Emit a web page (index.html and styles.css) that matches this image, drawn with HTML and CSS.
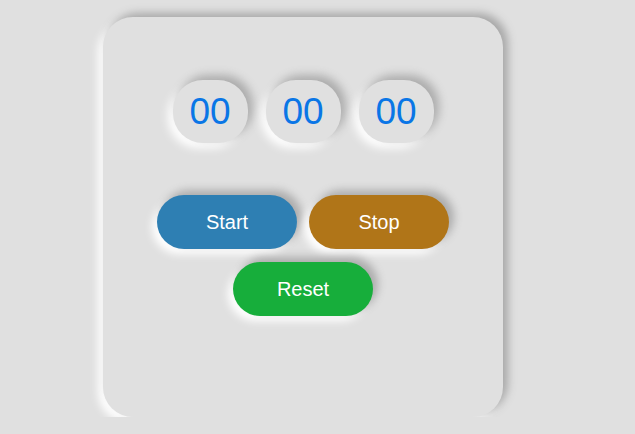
FILE: index.html
```html
<!DOCTYPE html>
<html>
<head>
<meta charset="utf-8">
<link rel="stylesheet" href="styles.css">
</head>
<body>
<div class="card">
  <div class="time">
    <div class="unit">00</div>
    <div class="unit">00</div>
    <div class="unit">00</div>
  </div>
  <div class="controls">
    <button class="btn start">Start</button>
    <button class="btn stop">Stop</button>
    <button class="btn reset">Reset</button>
  </div>
</div>
</body>
</html>
```
FILE: styles.css
```css
html, body {
  margin: 0;
  padding: 0;
  background: #e0e0e0;
  font-family: "Liberation Sans", Arial, sans-serif;
}
body {
  padding: 17px 0 0 103px;
}
.card {
  width: 400px;
  height: 400px;
  box-sizing: border-box;
  border-radius: 30px;
  background: #e0e0e0;
  box-shadow: 5px -4px 9px #a8a8a8, -5px 5px 9px #ffffff;
  padding-top: 63px;
}
.time {
  display: flex;
  justify-content: center;
  gap: 18px;
}
.unit {
  width: 75px;
  height: 63px;
  border-radius: 30px;
  background: #e0e0e0;
  box-shadow: 5px -5px 10px #acacac, -5px 5px 10px #ffffff;
  color: #0a76e6;
  font-size: 37px;
  display: flex;
  align-items: center;
  justify-content: center;
}
.controls {
  display: flex;
  flex-wrap: wrap;
  justify-content: center;
  column-gap: 12px;
  row-gap: 13px;
  width: 296px;
  margin: 52px auto 0;
}
.btn {
  width: 140px;
  height: 54px;
  border: none;
  border-radius: 27px;
  color: #fff;
  font-family: "Liberation Sans", Arial, sans-serif;
  font-size: 20px;
  box-shadow: 5px -5px 9px #acacac, -5px 5px 9px #ffffff;
  padding: 0;
}
.start { background: #2e7fb3; }
.stop { background: #b07518; }
.reset { background: #17ae3b; }
```
